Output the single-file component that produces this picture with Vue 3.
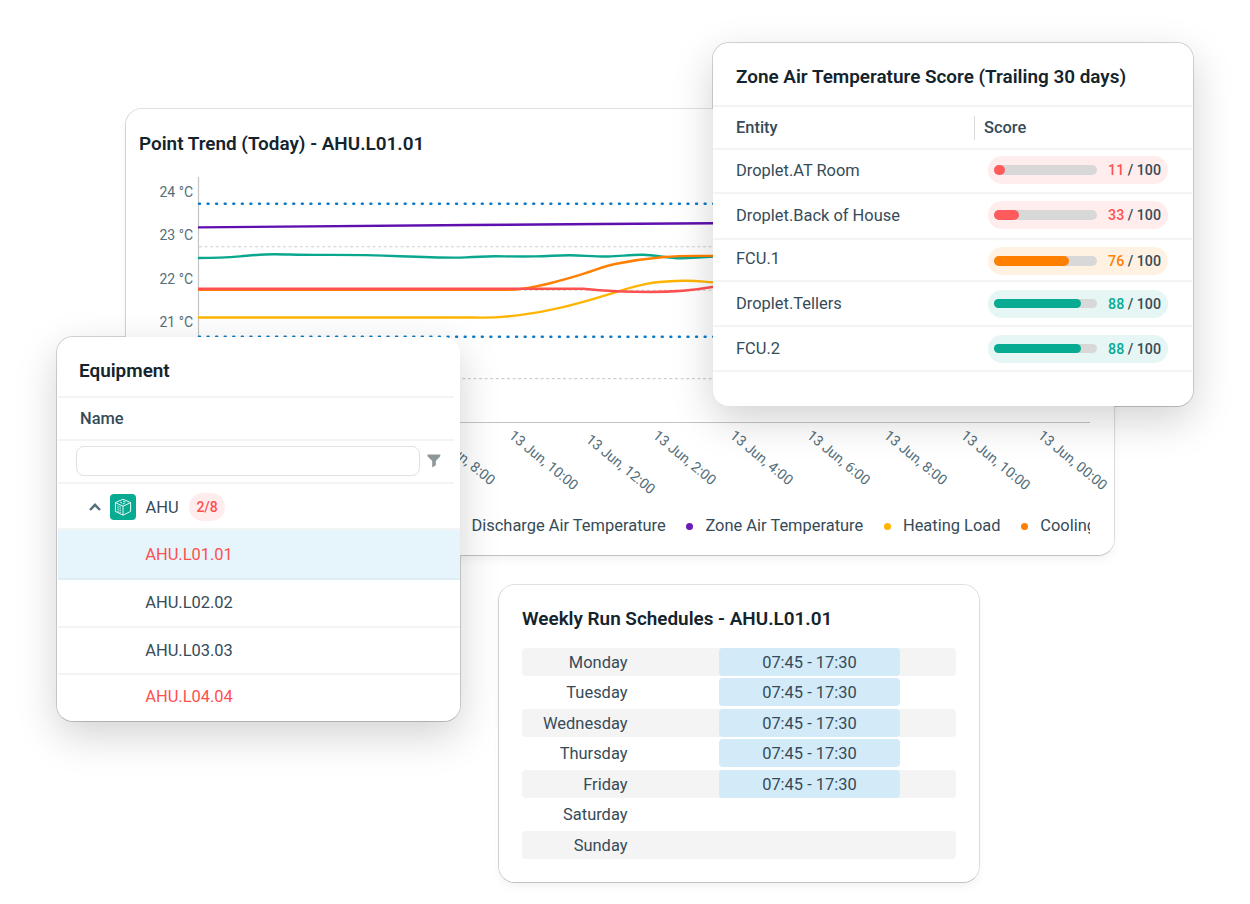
<script setup>
import { ref } from 'vue';

const equipment = ref([
    { id: 1, name: 'AHU.L01.01', alert: true, selected: true },
    { id: 2, name: 'AHU.L02.02', alert: false, selected: false },
    { id: 3, name: 'AHU.L03.03', alert: false, selected: false },
    { id: 4, name: 'AHU.L04.04', alert: true, selected: false }
]);

const scores = ref([
    { id: 1, entity: 'Droplet.AT Room', score: 11, fill: 11, level: 'bad' },
    { id: 2, entity: 'Droplet.Back of House', score: 33, fill: 24.5, level: 'bad' },
    { id: 3, entity: 'FCU.1', score: 76, fill: 73, level: 'warn' },
    { id: 4, entity: 'Droplet.Tellers', score: 88, fill: 84, level: 'good' },
    { id: 5, entity: 'FCU.2', score: 88, fill: 84, level: 'good' }
]);

const schedule = ref([
    { day: 'Monday', hours: '07:45 - 17:30' },
    { day: 'Tuesday', hours: '07:45 - 17:30' },
    { day: 'Wednesday', hours: '07:45 - 17:30' },
    { day: 'Thursday', hours: '07:45 - 17:30' },
    { day: 'Friday', hours: '07:45 - 17:30' },
    { day: 'Saturday', hours: '' },
    { day: 'Sunday', hours: '' }
]);

const yTicks = [
    { label: '24 °C', y: 196.5 },
    { label: '23 °C', y: 240 },
    { label: '22 °C', y: 283.5 },
    { label: '21 °C', y: 327 }
];

const xTicks = [
    { label: '13 Jun, 8:00', x: 431, y: 437 },
    { label: '13 Jun, 10:00', x: 508, y: 437 },
    { label: '13 Jun, 12:00', x: 585, y: 441 },
    { label: '13 Jun, 2:00', x: 652, y: 437 },
    { label: '13 Jun, 4:00', x: 729, y: 437 },
    { label: '13 Jun, 6:00', x: 806, y: 437 },
    { label: '13 Jun, 8:00', x: 883, y: 437 },
    { label: '13 Jun, 10:00', x: 960, y: 437 },
    { label: '13 Jun, 00:00', x: 1037, y: 437 }
];

const series = [
    { color: '#5f0fae', d: 'M198 227.4 C300 226.6 400 225.4 470 225 S640 223.6 714 223.2' },
    { color: '#0aa78f', d: 'M198 258 C215 258 228 257.4 240 256.4 S262 254.2 275 254.3 S300 255 320 254.9 S370 255 400 256.2 S450 258 466 257.4 S485 256.3 495 256.3 S520 256.7 535 256.4 S558 255.1 570 255.2 S595 256.7 608 256.5 S630 254.6 643 254.8 S668 258.4 682 258.2 S704 257.4 714 256.6' },
    { color: '#ff7f00', d: 'M198 289.9 H508 C530 289.6 556 282 575 276.4 S602 266.6 615 264 S645 258.6 664 257 S695 256 714 255.9' },
    { color: '#ffb400', d: 'M198 317.5 H474 C500 318.6 535 314 562 307.4 S600 297 620 290.8 S652 281.8 675 281 S700 281.6 714 282.4' },
    { color: '#ff5050', d: 'M198 288.7 H583 C600 290.4 625 292 650 292 S690 291 714 286.8' }
];

const legend = [
    { label: 'Discharge Air Temperature', color: '#0aa78f' },
    { label: 'Zone Air Temperature', color: '#6a1bb5' },
    { label: 'Heating Load', color: '#ffb400' },
    { label: 'Cooling', color: '#ff7f00' }
];
</script>

<template>
    <main class="canvas">
        <section class="card trend">
            <h3 class="card-title">Point Trend (Today) - AHU.L01.01</h3>
            <svg class="chart" viewBox="139 170 975 335" width="975" height="335">
                <g class="grid">
                    <line x1="199" y1="246.8" x2="1090" y2="246.8" />
                    <line x1="199" y1="290.3" x2="1090" y2="290.3" />
                    <line x1="199" y1="378.6" x2="1090" y2="378.6" />
                </g>
                <path class="axis" d="M198.5 177 V422.5 H1090" />
                <line class="limit" x1="199" y1="203.7" x2="1090" y2="203.7" />
                <line class="limit" x1="199" y1="336.7" x2="1090" y2="336.7" />
                <path v-for="line in series" :key="line.color" class="series" :d="line.d" :stroke="line.color" />
                <text v-for="tick in yTicks" :key="tick.label" class="tick" x="193" :y="tick.y" text-anchor="end">{{ tick.label }}</text>
                <text
                    v-for="tick in xTicks"
                    :key="tick.x"
                    class="tick tick-x"
                    :transform="`translate(${tick.x} ${tick.y}) rotate(39.5)`"
                >{{ tick.label }}</text>
            </svg>
            <ul class="legend">
                <li v-for="item in legend" :key="item.label">
                    <span class="dot" :style="{ backgroundColor: item.color }"></span>
                    <span>{{ item.label }}</span>
                </li>
            </ul>
        </section>

        <section class="card equipment">
            <h3 class="card-title">Equipment</h3>
            <div class="column-name">Name</div>
            <div class="filter">
                <input type="text" aria-label="Filter by name" />
                <svg width="14" height="14" viewBox="0 0 14 14">
                    <path d="M0.5 0.5 H13.3 V2.2 L8.8 7 V11.2 L5.2 13.4 V7 L0.5 2.2 Z" fill="#8d9799" />
                </svg>
            </div>
            <div class="group">
                <svg class="chevron" width="12" height="8" viewBox="0 0 12 8">
                    <path d="M1 7 L6 1.8 L11 7" fill="none" stroke="#546e7a" stroke-width="2.4" />
                </svg>
                <svg class="cube" width="26" height="26" viewBox="0 0 26 26">
                    <rect width="26" height="26" rx="4" fill="#06ab92" />
                    <g fill="none" stroke="#fff" stroke-width="0.9" stroke-linejoin="round">
                        <path d="M13 5.2 L20.6 8.6 V17.4 L13 21.2 L5.4 17.4 V8.6 Z" />
                        <path d="M5.4 8.6 L13 12.2 L20.6 8.6 M13 12.2 V21.2" />
                        <path d="M7.4 11.6 L11 13.3 M7.4 13.5 L11 15.2 M7.4 15.4 L11 17.1 M7.4 17.3 L11 19" stroke-dasharray="1.5 0.8" />
                        <path d="M10.2 8.2 L12 9 M13 7 L15.4 8 M12.6 10 L14.6 9.2" />
                    </g>
                </svg>
                <span class="group-name">AHU</span>
                <span class="badge">2/8</span>
            </div>
            <ul class="rows">
                <li v-for="item in equipment" :key="item.id" :class="{ alert: item.alert, selected: item.selected }">
                    {{ item.name }}
                </li>
            </ul>
        </section>

        <section class="card score">
            <h3 class="card-title">Zone Air Temperature Score (Trailing 30 days)</h3>
            <div class="row head">
                <span>Entity</span>
                <span class="head-score">Score</span>
            </div>
            <div v-for="row in scores" :key="row.id" class="row" :class="`row-${row.id}`">
                <span class="entity">{{ row.entity }}</span>
                <div class="pill" :class="row.level">
                    <div class="track">
                        <div class="fill" :style="{ width: row.fill + '%' }"></div>
                    </div>
                    <span class="value"><b>{{ row.score }}</b> / 100</span>
                </div>
            </div>
        </section>

        <section class="card schedule">
            <h3 class="card-title">Weekly Run Schedules - AHU.L01.01</h3>
            <ul class="days">
                <li v-for="row in schedule" :key="row.day">
                    <span class="day">{{ row.day }}</span>
                    <span v-if="row.hours" class="slot">{{ row.hours }}</span>
                </li>
            </ul>
        </section>
    </main>
</template>

<style>
body {
    background: #fff;
}
</style>

<style scoped>
.canvas {
    position: relative;
    isolation: isolate;
    width: 1250px;
    height: 904px;
    overflow: hidden;
    background: #fff;
    font-family: Roboto, "Liberation Sans", sans-serif;
    font-size: 16.45px;
    color: #364b58;
}

ul {
    margin: 0;
    padding: 0;
    list-style: none;
}

/* --- CARDS --- */
.card {
    position: absolute;
    box-sizing: border-box;
    display: flex;
    flex-direction: column;
    background: #fff;
    border-radius: 16px;
}

.card > * {
    flex-shrink: 0;
}

/* Outline sits under every card, so it only shows against the page */
.card::before {
    content: '';
    position: absolute;
    z-index: -1;
    inset: -1px;
    border: 1px solid #d6d8d8;
    border-bottom-color: #c9cbcb;
    border-radius: 17px;
}

.card-title {
    margin: 0;
    font-size: 18.9px;
    font-weight: 600;
    line-height: 24px;
    color: #14242d;
}

/* --- POINT TREND --- */
.trend {
    left: 126px;
    top: 109px;
    width: 988px;
    height: 446px;
    padding: 23px 0 0 13px;
    box-shadow: 0 5px 8px rgba(0, 0, 0, 0.05);
}

.trend::before,
.schedule::before {
    border-top-color: #e0e2e2;
    border-right-color: #e0e2e2;
}

.chart {
    display: block;
    margin-top: 14px;
}

.grid line {
    stroke: #cfcfcf;
    stroke-width: 1.1;
    stroke-dasharray: 3 2.6;
}

.axis {
    fill: none;
    stroke: #c3c5c5;
    stroke-width: 1.2;
}

.limit {
    stroke: #0a7bc8;
    stroke-width: 2.4;
    stroke-linecap: round;
    stroke-dasharray: 1 7.57;
}

.series {
    fill: none;
    stroke-width: 2.4;
}

.tick {
    font-size: 14px;
    fill: #546e7a;
}

.tick-x {
    font-size: 14.2px;
}

.legend {
    display: flex;
    gap: 20.7px;
    width: 951px;
    box-sizing: border-box;
    padding-left: 313.5px;
    margin-top: 9px;
    overflow: hidden;
    line-height: 24px;
    white-space: nowrap;
}

.legend li {
    display: flex;
    align-items: center;
    gap: 12px;
}

.dot {
    flex: none;
    width: 7px;
    height: 7px;
    border-radius: 50%;
}

/* --- EQUIPMENT --- */
.equipment {
    left: 57px;
    top: 337px;
    width: 403px;
    height: 384px;
    box-shadow: 0 14px 42px rgba(0, 0, 0, 0.18);
}

.equipment .card-title,
.column-name,
.filter,
.group {
    box-sizing: border-box;
    margin: 0 6px 0 1px;
    border-bottom: 2px solid #f3f4f4;
}

.equipment .card-title {
    height: 61px;
    padding: 22px 0 0 21px;
}

.column-name {
    height: 43px;
    padding-left: 22px;
    line-height: 41px;
    font-weight: 500;
}

.filter {
    display: flex;
    align-items: center;
    gap: 7px;
    height: 43px;
    padding: 0 0 2px 18px;
}

.filter input {
    box-sizing: border-box;
    width: 344px;
    height: 30px;
    padding: 0 8px;
    border: 1.5px solid #e0e2e2;
    border-radius: 8px;
    background: #fff;
    outline: none;
}

.group {
    display: flex;
    align-items: center;
    height: 46px;
    margin-right: 0;
    padding-left: 31px;
    padding-top: 2px;
}

.cube {
    margin-left: 9px;
}

.group-name {
    margin-left: 9.5px;
}

.badge {
    width: 36px;
    margin-left: 10.5px;
    border-radius: 14px;
    background: #ffeded;
    color: #ff4f4f;
    font-size: 14px;
    font-weight: 500;
    line-height: 28px;
    text-align: center;
}

.rows {
    margin-left: 1px;
}

.rows li {
    box-sizing: border-box;
    height: 47px;
    padding-left: 87.2px;
    line-height: 45px;
    border-bottom: 2px solid #f3f4f4;
}

.rows li:nth-child(2) {
    height: 48px;
    line-height: 46px;
}

.rows li:last-child {
    height: 46px;
    line-height: 44px;
    border-bottom: 0;
}

.rows .selected {
    height: 50px;
    line-height: 50px;
    background: #e6f4fc;
    border-bottom-color: #dfeef5;
}

.rows .alert {
    color: #ff4f4f;
}

/* --- ZONE SCORE --- */
.score {
    left: 713px;
    top: 43px;
    width: 480px;
    height: 363px;
    box-shadow: 0 14px 42px rgba(0, 0, 0, 0.18);
}

.score .card-title {
    box-sizing: border-box;
    height: 64px;
    margin-right: 1px;
    padding: 22px 0 0 23px;
    border-bottom: 2px solid #f3f4f4;
}

.row {
    box-sizing: border-box;
    display: grid;
    grid-template-columns: 252px 180px;
    align-items: center;
    height: 45px;
    margin-right: 1px;
    padding-left: 23px;
    border-bottom: 2px solid #f3f4f4;
}

.head {
    height: 43px;
    grid-template-columns: 238px 1fr;
    font-weight: 500;
}

.head-score {
    padding-left: 9px;
    border-left: 1px solid #d8dada;
    line-height: 24px;
}

.row-1 {
    height: 44px;
    padding-bottom: 2px;
}

.row-2 {
    height: 46px;
    padding-bottom: 2px;
}

.row-3 {
    height: 42px;
    padding-top: 2px;
}

.row-3 .entity {
    padding-bottom: 5px;
}

.row-4 {
    height: 45px;
}

.pill {
    box-sizing: border-box;
    display: flex;
    align-items: center;
    justify-content: space-between;
    height: 28px;
    padding: 0 7px 0 6px;
    border-radius: 14px;
    font-size: 14.2px;
    font-weight: 500;
}

.track {
    width: 103px;
    height: 9.5px;
    border-radius: 5px;
    background: #d8d8d8;
}

.fill {
    height: 100%;
    border-radius: 5px;
}

.value b {
    font-weight: 500;
}

.bad {
    background: #ffeded;
}

.bad .fill {
    background: #ff5a5c;
}

.bad b {
    color: #ff5254;
}

.warn {
    background: #fff2e3;
}

.warn .fill {
    background: #ff7f00;
}

.warn b {
    color: #ff7f00;
}

.good {
    background: #e5f6f4;
}

.good .fill {
    background: #06ab92;
}

.good b {
    color: #06ab92;
}

/* --- WEEKLY SCHEDULE --- */
.schedule {
    left: 499px;
    top: 585px;
    width: 480px;
    height: 297px;
    padding: 22px 23.5px 0 23px;
    box-shadow: 0 5px 8px rgba(0, 0, 0, 0.05);
}

.days {
    display: flex;
    flex-direction: column;
    gap: 2.55px;
    margin-top: 16.7px;
}

.days li {
    display: grid;
    grid-template-columns: 105.5px 180.5px;
    column-gap: 91.7px;
    height: 28px;
    line-height: 29px;
    border-radius: 4px;
}

.days li:nth-child(odd) {
    background: #f4f4f4;
}

.day {
    text-align: right;
}

.slot {
    height: 28px;
    border-radius: 4px;
    background: #d3eaf9;
    text-align: center;
}
</style>
